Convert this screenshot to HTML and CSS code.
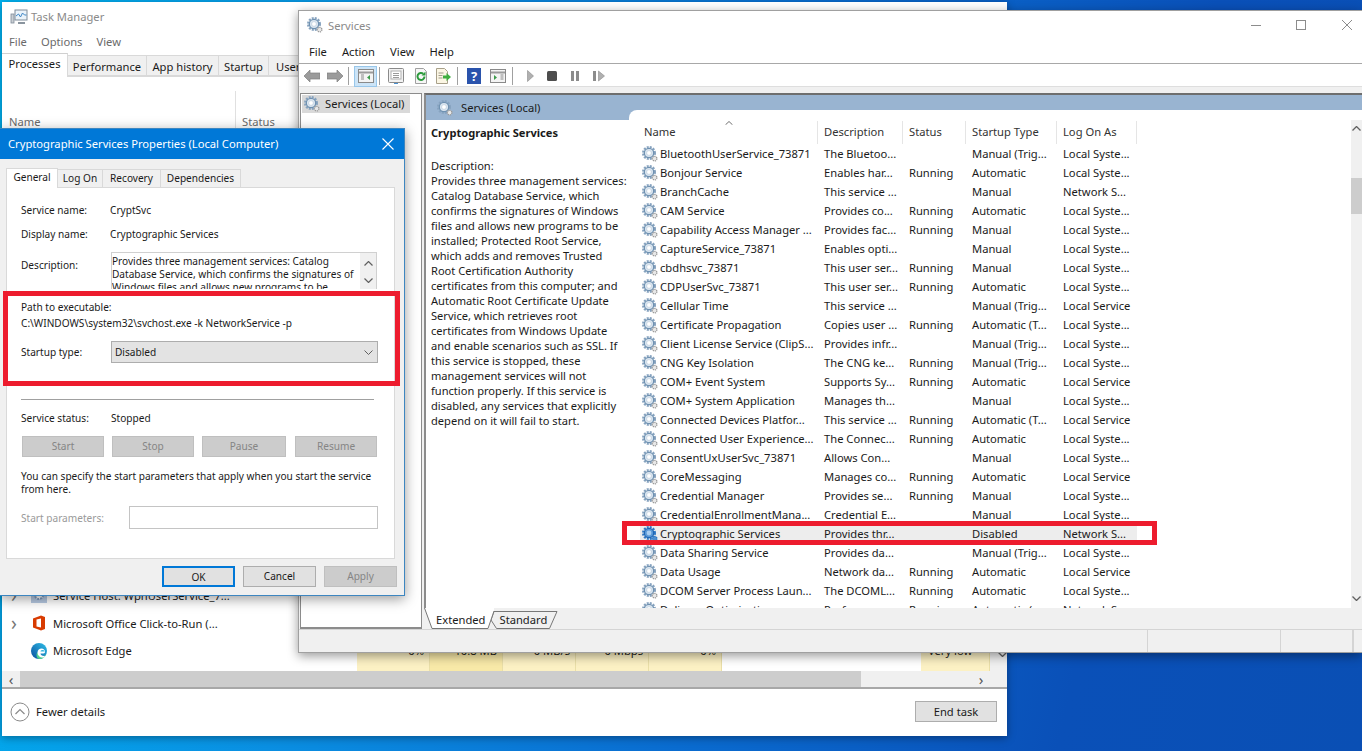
FILE: index.html
```html
<!DOCTYPE html>
<html>
  <head>
    <meta charset="UTF-8" />
    <meta name="viewport" content="width=device-width, initial-scale=1.0" />
    <link rel="stylesheet" href="styles.css">
    <title>Services</title>
  </head>

  <body>
    <svg class="defs" width="0" height="0">
      <defs>
        <linearGradient id="edge-body" x1="0" y1="1" x2="1" y2="0">
          <stop offset="0" stop-color="#0b4f9e" />
          <stop offset="1" stop-color="#2fc0e8" />
        </linearGradient>
      </defs>
      <symbol id="gear" viewBox="0 0 16 16">
        <circle cx="7" cy="7" r="6" fill="none" stroke="#87a3bf" stroke-width="2" stroke-dasharray="2 1.15" />
        <circle cx="7" cy="7" r="4.7" fill="#dbe6f0" stroke="#6f91b1" stroke-width="1.3" />
        <circle cx="7" cy="7" r="2.4" fill="#fff" stroke="#b4c6d8" stroke-width=".6" />
        <circle cx="12.6" cy="12.6" r="2.3" fill="#e8e8e8" stroke="#9a9a9a" stroke-width="1.3" stroke-dasharray="1.2 .7" />
      </symbol>
      <symbol id="gear-sel" viewBox="0 0 16 16">
        <circle cx="7" cy="7" r="6" fill="none" stroke="#2f78c4" stroke-width="2" stroke-dasharray="2 1.15" />
        <circle cx="7" cy="7" r="4.7" fill="#5c9ad8" stroke="#1f66b4" stroke-width="1.3" />
        <circle cx="7" cy="7" r="2.4" fill="#a9cdf0" />
        <circle cx="12.6" cy="12.6" r="2.3" fill="#4f8fd0" stroke="#2f78c4" stroke-width="1.3" stroke-dasharray="1.2 .7" />
      </symbol>
    </svg>

    <div class="desktop">

      <!-- task manager, behind everything -->
      <div class="window tm">
        <div class="tm-title">
          <svg class="tm-logo" viewBox="0 0 18 16" width="18" height="16">
            <rect x="5" y="1" width="12" height="10" fill="#eaf3fa" stroke="#7f8c99" />
            <path d="M6 7l2.500-2 2 3 2-4 2 2h2" fill="none" stroke="#3d86c6" />
            <rect x="1" y="5" width="3" height="9" fill="#c9ced3" stroke="#7f8c99" stroke-width=".8" />
            <path d="M8 14h7" stroke="#8a949e" stroke-width="2" />
          </svg>
          Task Manager
        </div>
        <div class="tm-menu"><span>File</span><span>Options</span><span>View</span></div>
        <div class="tm-tabs">
          <div class="tm-tab active w-proc">Processes</div>
          <div class="tm-tab w-perf">Performance</div>
          <div class="tm-tab w-app">App history</div>
          <div class="tm-tab w-start">Startup</div>
          <div class="tm-tab w-users">Users</div>
        </div>
        <div class="tm-table">
          <div class="tm-head">
            <div class="tm-head-name">Name</div>
            <div class="tm-head-status">Status</div>
          </div>
          <div class="tm-rows">
            <div class="tm-row">
              <span class="chev">&#8250;</span>
              <svg class="tm-ico" viewBox="0 0 16 16" width="16" height="16">
                <rect width="16" height="16" fill="#b6c9e2" />
                <circle cx="8" cy="8" r="4" fill="#fff" stroke="#7f9cc0" stroke-width="2" stroke-dasharray="2 1" />
              </svg>
              <span class="tm-name">Service Host: WpnUserService_7...</span>
            </div>
            <div class="tm-row">
              <span class="chev">&#8250;</span>
              <svg class="tm-ico" viewBox="0 0 16 16" width="16" height="16">
                <path d="M2 3.500 10 .5l4 1.500v12l-4 1.500-8-3z" fill="#d83b01" />
                <path d="M5.500 4.500 10 3.500v9l-4.500-1z" fill="#fff" />
              </svg>
              <span class="tm-name">Microsoft Office Click-to-Run (...</span>
            </div>
            <div class="tm-row last">
              <span class="chev"></span>
              <svg class="tm-ico" viewBox="0 0 16 16" width="16" height="16">
                <circle cx="8" cy="8" r="8" fill="url(#edge-body)" />
                <path d="M6.500 9c0 3 3 5 6.500 4l2-1.500C14 14.500 11 16 8.500 16 6 16 4.500 12 6.500 9z" fill="#4fd08c" />
                <path d="M6.500 9.500C6.500 7 8.500 5.500 10.500 5.500s3.500 1.500 3.500 3.500c0 1-1 1.500-3 1.500H9.500c0 1.500 2 3 4.500 2.500l-1 1.500C9 15 6.500 12.500 6.500 9.500z" fill="#fff" />
                <path d="M9.500 8.500c0-1 1-1.500 2-1.500s2 .5 2 1.500z" fill="#2fb4e0" />
              </svg>
              <span class="tm-name">Microsoft Edge</span>
              <div class="tm-cells">
                <div class="cell">0%</div>
                <div class="cell dark">10.8 MB</div>
                <div class="cell">0 MB/s</div>
                <div class="cell">0 Mbps</div>
                <div class="cell">0%</div>
                <div class="cell blank"></div>
                <div class="cell power">Very low</div>
                <div class="cell scroll">
                  <svg viewBox="0 0 9 5" width="9" height="5"><path d="M.5.500l4 4 4-4" fill="none" stroke="#606060" stroke-width="1.300" /></svg>
                </div>
              </div>
            </div>
          </div>
        </div>
        <div class="tm-hscroll">
          <span class="arrow">&#8249;</span>
          <div class="thumb"></div>
          <span class="arrow">&#8250;</span>
        </div>
        <div class="tm-footer">
          <div class="fewer">
            <svg viewBox="0 0 20 20" width="20" height="20">
              <circle cx="10" cy="10" r="9" fill="#fff" stroke="#8a8a8a" />
              <path d="M5.500 12 10 7.500l4.500 4.500" fill="none" stroke="#8a8a8a" stroke-width="1.200" />
            </svg>
            Fewer details
          </div>
          <div class="end-task">End task</div>
        </div>
      </div>

      <!-- services console -->
      <div class="window svc">
        <div class="svc-title">
          <svg class="gear" width="16" height="16"><use href="#gear" /></svg>
          <span class="svc-title-text">Services</span>
          <div class="caption">
            <svg viewBox="0 0 10 10" width="10" height="10"><path d="M0 5.500h10" stroke="#8c8c8c" /></svg>
            <svg viewBox="0 0 10 10" width="10" height="10"><rect x=".5" y=".5" width="9" height="9" fill="none" stroke="#8c8c8c" /></svg>
            <svg viewBox="0 0 10 10" width="10" height="10"><path d="M0 0l10 10M10 0L0 10" stroke="#8c8c8c" /></svg>
          </div>
        </div>
        <div class="svc-menu"><span>File</span><span>Action</span><span>View</span><span>Help</span></div>
        <div class="toolbar">
          <svg class="t-back" viewBox="0 0 16 12" width="16" height="12"><path d="M0 6l6-6v3h10v6H6v3z" fill="#9b9b9b" stroke="#808080" stroke-width=".7" /></svg>
          <svg class="t-fwd" viewBox="0 0 16 12" width="16" height="12"><path d="M16 6l-6-6v3H0v6h10v3z" fill="#9b9b9b" stroke="#808080" stroke-width=".7" /></svg>
          <div class="t-sep first"></div>
          <div class="t-on">
            <svg viewBox="0 0 16 14" width="16" height="14">
              <rect x=".5" y=".5" width="15" height="13" fill="#f4f4f4" stroke="#8a8a8a" />
              <path d="M1 3.500h14" stroke="#9a9a9a" stroke-width="2" />
              <path d="M3 6h3M3 8h3M3 10h3" stroke="#8a8a8a" />
              <path d="M12 6v5l-3-2.500z" fill="#3c9a4a" />
            </svg>
          </div>
          <div class="t-sep"></div>
          <svg class="t-prop" viewBox="0 0 16 16" width="16" height="16">
            <rect x=".5" y=".5" width="15" height="14" rx="1" fill="#f2f2f2" stroke="#8a8a8a" />
            <rect x="3" y="3" width="10" height="8" fill="#fff" stroke="#b0b0b0" />
            <path d="M5 5.500h6M5 7.500h6M5 9.500h6" stroke="#9a9a9a" />
            <path d="M6 15.500h4" stroke="#4a90d0" />
          </svg>
          <svg class="t-ref" viewBox="0 0 16 16" width="16" height="16">
            <path d="M2.500.5h8l3 3v12h-11z" fill="#f6f6f6" stroke="#a0a0a0" />
            <path d="M11.500 8.500a3.500 3.500 0 1 1-1.200-2.700" fill="none" stroke="#2c9a3c" stroke-width="2" />
            <path d="M12.500 3.500v4h-4z" fill="#2c9a3c" />
          </svg>
          <svg class="t-exp" viewBox="0 0 16 16" width="16" height="16">
            <path d="M1.500.5h8l3 3v12h-11z" fill="#fbf6e4" stroke="#a8a08a" />
            <path d="M3.500 5h5M3.500 7.500h4M3.500 10h4" stroke="#a09a8a" />
            <path d="M8 7.500h3.500V5L16 9l-4.500 4v-2.500H8z" fill="#3fae3f" />
          </svg>
          <div class="t-sep mid"></div>
          <svg class="t-help" viewBox="0 0 14 16" width="14" height="16">
            <rect width="14" height="16" fill="#2a53ac" />
            <text x="7" y="13" class="qmark">?</text>
          </svg>
          <svg class="t-act" viewBox="0 0 16 14" width="16" height="14">
            <rect x=".5" y=".5" width="15" height="13" fill="#f4f4f4" stroke="#8a8a8a" />
            <path d="M1 3.500h14" stroke="#9a9a9a" stroke-width="2" />
            <path d="M10.500 6h3M10.500 8h3M10.500 10h3" stroke="#8a8a8a" />
            <path d="M4 6v5l3-2.500z" fill="#3c9a4a" />
          </svg>
          <div class="t-sep last"></div>
          <svg class="t-play" viewBox="0 0 7 12" width="7" height="12"><path d="M.5.500v11l6-5.500z" fill="#b0b0b0" stroke="#8c8c8c" stroke-width=".6" /></svg>
          <svg class="t-stop" viewBox="0 0 10 10" width="10" height="10"><rect width="10" height="10" rx="1.500" fill="#4d4d4d" /></svg>
          <svg class="t-pause" viewBox="0 0 8 10" width="8" height="10"><path d="M0 0h3v10H0zM5 0h3v10H5z" fill="#8c8c8c" /></svg>
          <svg class="t-resume" viewBox="0 0 12 12" width="12" height="12"><path d="M0 1h3v10H0z" fill="#8c8c8c" /><path d="M5.500 1v10l6-5z" fill="#b0b0b0" stroke="#8c8c8c" stroke-width=".6" /></svg>
        </div>

        <div class="svc-panes">
          <div class="tree">
            <div class="tree-item">
              <svg class="gear" width="16" height="16"><use href="#gear" /></svg>
              <span>Services (Local)</span>
            </div>
          </div>
          <div class="main">
            <div class="main-pane">
              <div class="band">
                <svg class="gear" width="16" height="16"><use href="#gear" /></svg>
                <span>Services (Local)</span>
              </div>
              <div class="main-body">
                <div class="detail">
                  <div class="detail-name">Cryptographic Services</div>
                  Description:<br>
                  Provides three management services:<br>
                  Catalog Database Service, which<br>
                  confirms the signatures of Windows<br>
                  files and allows new programs to be<br>
                  installed; Protected Root Service,<br>
                  which adds and removes Trusted<br>
                  Root Certification Authority<br>
                  certificates from this computer; and<br>
                  Automatic Root Certificate Update<br>
                  Service, which retrieves root<br>
                  certificates from Windows Update<br>
                  and enable scenarios such as SSL. If<br>
                  this service is stopped, these<br>
                  management services will not<br>
                  function properly. If this service is<br>
                  disabled, any services that explicitly<br>
                  depend on it will fail to start.
                </div>
                <div class="list-wrap">
                  <div class="list">
                    <div class="list-head">
                      <div class="hcell first">Name
                        <svg class="sort" viewBox="0 0 8 4" width="8" height="4"><path d="M.5 3.800 4 .5l3.500 3.300" fill="none" stroke="#707070" /></svg>
                      </div>
                      <div class="hcell">Description</div>
                      <div class="hcell">Status</div>
                      <div class="hcell">Startup Type</div>
                      <div class="hcell">Log On As</div>
                    </div>
                    <div class="row"><div class="c-name"><svg class="gear" width="16" height="16"><use href="#gear" /></svg>BluetoothUserService_73871</div><div>The Bluetoo...</div><div></div><div>Manual (Trig...</div><div>Local Syste...</div></div>
                    <div class="row"><div class="c-name"><svg class="gear" width="16" height="16"><use href="#gear" /></svg>Bonjour Service</div><div>Enables har...</div><div>Running</div><div>Automatic</div><div>Local Syste...</div></div>
                    <div class="row"><div class="c-name"><svg class="gear" width="16" height="16"><use href="#gear" /></svg>BranchCache</div><div>This service ...</div><div></div><div>Manual</div><div>Network S...</div></div>
                    <div class="row"><div class="c-name"><svg class="gear" width="16" height="16"><use href="#gear" /></svg>CAM Service</div><div>Provides co...</div><div>Running</div><div>Automatic</div><div>Local Syste...</div></div>
                    <div class="row"><div class="c-name"><svg class="gear" width="16" height="16"><use href="#gear" /></svg>Capability Access Manager ...</div><div>Provides fac...</div><div>Running</div><div>Manual</div><div>Local Syste...</div></div>
                    <div class="row"><div class="c-name"><svg class="gear" width="16" height="16"><use href="#gear" /></svg>CaptureService_73871</div><div>Enables opti...</div><div></div><div>Manual</div><div>Local Syste...</div></div>
                    <div class="row"><div class="c-name"><svg class="gear" width="16" height="16"><use href="#gear" /></svg>cbdhsvc_73871</div><div>This user ser...</div><div>Running</div><div>Manual</div><div>Local Syste...</div></div>
                    <div class="row"><div class="c-name"><svg class="gear" width="16" height="16"><use href="#gear" /></svg>CDPUserSvc_73871</div><div>This user ser...</div><div>Running</div><div>Automatic</div><div>Local Syste...</div></div>
                    <div class="row"><div class="c-name"><svg class="gear" width="16" height="16"><use href="#gear" /></svg>Cellular Time</div><div>This service ...</div><div></div><div>Manual (Trig...</div><div>Local Service</div></div>
                    <div class="row"><div class="c-name"><svg class="gear" width="16" height="16"><use href="#gear" /></svg>Certificate Propagation</div><div>Copies user ...</div><div>Running</div><div>Automatic (T...</div><div>Local Syste...</div></div>
                    <div class="row"><div class="c-name"><svg class="gear" width="16" height="16"><use href="#gear" /></svg>Client License Service (ClipS...</div><div>Provides infr...</div><div></div><div>Manual (Trig...</div><div>Local Syste...</div></div>
                    <div class="row"><div class="c-name"><svg class="gear" width="16" height="16"><use href="#gear" /></svg>CNG Key Isolation</div><div>The CNG ke...</div><div>Running</div><div>Manual (Trig...</div><div>Local Syste...</div></div>
                    <div class="row"><div class="c-name"><svg class="gear" width="16" height="16"><use href="#gear" /></svg>COM+ Event System</div><div>Supports Sy...</div><div>Running</div><div>Automatic</div><div>Local Service</div></div>
                    <div class="row"><div class="c-name"><svg class="gear" width="16" height="16"><use href="#gear" /></svg>COM+ System Application</div><div>Manages th...</div><div></div><div>Manual</div><div>Local Syste...</div></div>
                    <div class="row"><div class="c-name"><svg class="gear" width="16" height="16"><use href="#gear" /></svg>Connected Devices Platfor...</div><div>This service ...</div><div>Running</div><div>Automatic (T...</div><div>Local Service</div></div>
                    <div class="row"><div class="c-name"><svg class="gear" width="16" height="16"><use href="#gear" /></svg>Connected User Experience...</div><div>The Connec...</div><div>Running</div><div>Automatic</div><div>Local Syste...</div></div>
                    <div class="row"><div class="c-name"><svg class="gear" width="16" height="16"><use href="#gear" /></svg>ConsentUxUserSvc_73871</div><div>Allows Con...</div><div></div><div>Manual</div><div>Local Syste...</div></div>
                    <div class="row"><div class="c-name"><svg class="gear" width="16" height="16"><use href="#gear" /></svg>CoreMessaging</div><div>Manages co...</div><div>Running</div><div>Automatic</div><div>Local Service</div></div>
                    <div class="row"><div class="c-name"><svg class="gear" width="16" height="16"><use href="#gear" /></svg>Credential Manager</div><div>Provides se...</div><div>Running</div><div>Manual</div><div>Local Syste...</div></div>
                    <div class="row"><div class="c-name"><svg class="gear" width="16" height="16"><use href="#gear" /></svg>CredentialEnrollmentMana...</div><div>Credential E...</div><div></div><div>Manual</div><div>Local Syste...</div></div>
                    <div class="row selected"><div class="c-name"><svg class="gear" width="16" height="16"><use href="#gear-sel" /></svg>Cryptographic Services</div><div>Provides thr...</div><div></div><div>Disabled</div><div>Network S...</div></div>
                    <div class="row"><div class="c-name"><svg class="gear" width="16" height="16"><use href="#gear" /></svg>Data Sharing Service</div><div>Provides da...</div><div></div><div>Manual (Trig...</div><div>Local Syste...</div></div>
                    <div class="row"><div class="c-name"><svg class="gear" width="16" height="16"><use href="#gear" /></svg>Data Usage</div><div>Network da...</div><div>Running</div><div>Automatic</div><div>Local Service</div></div>
                    <div class="row"><div class="c-name"><svg class="gear" width="16" height="16"><use href="#gear" /></svg>DCOM Server Process Laun...</div><div>The DCOML...</div><div>Running</div><div>Automatic</div><div>Local Syste...</div></div>
                    <div class="row"><div class="c-name"><svg class="gear" width="16" height="16"><use href="#gear" /></svg>Delivery Optimization</div><div>Performs ...</div><div>Running</div><div>Automatic (...</div><div>Network S...</div></div>
                  </div>
                  <div class="vscroll">
                    <svg viewBox="0 0 9 5" width="9" height="5"><path d="M.5 4.500l4-4 4 4" fill="none" stroke="#606060" stroke-width="1.300" /></svg>
                    <div class="vthumb"></div>
                    <svg class="down" viewBox="0 0 9 5" width="9" height="5"><path d="M.5.500l4 4 4-4" fill="none" stroke="#606060" stroke-width="1.300" /></svg>
                  </div>
                </div>
              </div>
            </div>
            <div class="view-tabs">
              <svg class="view-shapes" viewBox="0 0 140 21" width="140" height="21">
                <path d="M70 3.500h63L125.500 20.500H72.500L67 12z" fill="#f0f0f0" stroke="#777" />
                <path d="M.5 0 8 20.500h56L70 3V0z" fill="#fff" />
                <path d="M.5 0 8 20.500h56L70 3" fill="none" stroke="#777" />
              </svg>
              <span class="view-label ext">Extended</span>
              <span class="view-label std">Standard</span>
            </div>
          </div>
        </div>
        <div class="svc-status">
          <div class="status-cell wide"></div>
          <div class="status-cell mid"></div>
          <div class="status-cell small"></div>
          <div class="status-cell"></div>
        </div>
        <div class="red-box red-row"></div>
      </div>

      <!-- properties dialog -->
      <div class="window dlg">
        <div class="dlg-title">
          <span>Cryptographic Services Properties (Local Computer)</span>
          <svg viewBox="0 0 12 12" width="12" height="12"><path d="M.5.500l11 11M11.500.500l-11 11" stroke="#fff" stroke-width="1.100" /></svg>
        </div>
        <div class="dlg-tabs">
          <div class="dlg-tab active t-gen">General</div>
          <div class="dlg-tab t-log">Log On</div>
          <div class="dlg-tab t-rec">Recovery</div>
          <div class="dlg-tab t-dep">Dependencies</div>
        </div>
        <div class="dlg-panel">
          <div class="field f-name"><span class="lbl">Service name:</span><span>CryptSvc</span></div>
          <div class="field f-display"><span class="lbl">Display name:</span><span>Cryptographic Services</span></div>
          <div class="field f-desc">
            <span class="lbl">Description:</span>
            <div class="desc-box">
              <div class="desc-text">Provides three management services: Catalog Database Service, which confirms the signatures of Windows files and allows new programs to be</div>
              <div class="desc-scroll">
                <svg viewBox="0 0 9 5" width="9" height="5"><path d="M.5 4.500l4-4 4 4" fill="none" stroke="#606060" stroke-width="1.200" /></svg>
                <svg viewBox="0 0 9 5" width="9" height="5"><path d="M.5.500l4 4 4-4" fill="none" stroke="#606060" stroke-width="1.200" /></svg>
              </div>
            </div>
          </div>
          <div class="path-label">Path to executable:</div>
          <div class="path-value">C:\WINDOWS\system32\svchost.exe -k NetworkService -p</div>
          <div class="field f-startup">
            <span class="lbl">Startup type:</span>
            <div class="combo">
              Disabled
              <svg viewBox="0 0 9 5" width="9" height="5"><path d="M.5.500l4 4 4-4" fill="none" stroke="#606060" /></svg>
            </div>
          </div>
          <div class="dlg-rule"></div>
          <div class="field f-status"><span class="lbl">Service status:</span><span class="status-val">Stopped</span></div>
          <div class="svc-buttons">
            <div class="btn off b-start">Start</div>
            <div class="btn off b-stop">Stop</div>
            <div class="btn off b-pause">Pause</div>
            <div class="btn off b-resume">Resume</div>
          </div>
          <div class="hint">You can specify the start parameters that apply when you start the service<br>from here.</div>
          <div class="field f-params">
            <span class="lbl-params">Start parameters:</span>
            <div class="params-input"></div>
          </div>
        </div>
        <div class="dlg-buttons">
          <div class="btn ok">OK</div>
          <div class="btn">Cancel</div>
          <div class="btn off">Apply</div>
        </div>
        <div class="red-box red-path"></div>
      </div>

    </div>
  </body>
</html>
```

FILE: styles.css
```css
* {
  box-sizing: border-box;
}

body {
  margin: 0px;
  font-family: "Noto Sans", "Open Sans", sans-serif;
  font-size: 11.2px;
  color: #1a1a1a;
}

.defs {
  position: absolute;
}

.desktop {
  position: relative;
  width: 1362px;
  height: 751px;
  overflow: hidden;
  background: linear-gradient(102deg, #00b2f0 0%, #0a8fe2 28%, #0a6cd0 55%, #0a50b8 80%, #0a4fb4 100%);
}

.window {
  position: absolute;
  display: flex;
  flex-direction: column;
}

.gear {
  flex: none;
}

.red-box {
  position: absolute;
  border: 5px solid #ed1c2e;
}

/* task manager */
.tm {
  left: 2px;
  top: 2px;
  width: 1005px;
  height: 734px;
  background: #fff;
  box-shadow: 0 2px 8px rgba(0, 0, 0, .35);
}

.tm-title {
  display: flex;
  align-items: center;
  gap: 3px;
  height: 29px;
  margin-bottom: 1px;
  padding-left: 8px;
  color: #8a8a8a;
}

.tm-menu {
  display: flex;
  gap: 14px;
  height: 20px;
  line-height: 20px;
  padding-left: 7px;
  color: #6a6a6a;
}

.tm-tabs {
  display: flex;
  align-items: flex-end;
  height: 25px;
  border-bottom: 1px solid #d9d9d9;
}

.tm-tab {
  height: 21px;
  line-height: 21px;
  text-align: center;
  background: #f0f0f0;
  border: 1px solid #d9d9d9;
  border-left: none;
}

.tm-tab.active {
  height: 24px;
  line-height: 20px;
  margin-bottom: -1px;
  background: #fff;
  border-bottom: none;
  border-top-color: #d0d0d0;
}

.w-proc { width: 66px; }
.w-perf { width: 79px; }
.w-app { width: 72px; }
.w-start { width: 50px; }
.w-users {
  width: 60px;
  text-align: left;
  padding-left: 7px;
}

.tm-table {
  flex: 1;
  display: flex;
  flex-direction: column;
  justify-content: space-between;
}

.tm-head {
  display: flex;
  height: 37px;
  margin-top: 14px;
  color: #6a6a6a;
}

.tm-head-name {
  width: 234px;
  padding: 23px 0 0 7px;
  border-right: 1px solid #e0e0e0;
}

.tm-head-status {
  padding: 23px 0 0 6px;
}

.tm-row {
  display: flex;
  align-items: center;
  height: 28px;
}

.tm-row.last {
  height: 34px;
  align-items: flex-start;
}

.chev {
  width: 29px;
  padding-left: 9px;
  font-size: 19px;
  line-height: 26px;
  color: #777;
}

.tm-ico {
  flex: none;
  margin-right: 6px;
}

.tm-row.last .tm-ico {
  margin-top: 6px;
}

.tm-row.last .tm-name {
  line-height: 28px;
}

.tm-name {
  width: 304px;
  white-space: nowrap;
}

.tm-cells {
  display: flex;
  height: 34px;
}

.cell {
  width: 73px;
  height: 34px;
  line-height: 28px;
  text-align: right;
  padding-right: 5px;
  background: #fcf1c4;
  border-right: 1px solid #eadfa8;
}

.cell.dark {
  background: #f8e9a8;
}

.cell.blank {
  width: 199px;
  background: #fff;
  border: none;
}

.cell.power {
  width: 69px;
  text-align: left;
  padding: 0 0 0 7px;
}

.cell.scroll {
  width: 17px;
  background: #f0f0f0;
  border: none;
  padding: 13px 0 0 4px;
  line-height: 5px;
}

.tm-hscroll {
  display: flex;
  align-items: center;
  height: 16px;
  background: #f0f0f0;
}

.tm-hscroll .arrow {
  width: 18px;
  text-align: center;
  font-size: 15px;
  line-height: 14px;
  color: #555;
}

.tm-hscroll .thumb {
  width: 841px;
  height: 16px;
  background: #cdcdcd;
}

.tm-hscroll .arrow:last-child {
  margin-left: 111px;
}

.tm-footer {
  display: flex;
  align-items: center;
  justify-content: space-between;
  height: 49px;
  border-top: 2px solid #a8a8a8;
  padding: 0 10px 2px 8px;
}

.fewer {
  display: flex;
  align-items: center;
  gap: 6px;
}

.end-task {
  width: 82px;
  height: 21px;
  line-height: 19px;
  text-align: center;
  background: #e1e1e1;
  border: 1px solid #adadad;
}

/* services window */
.svc {
  left: 298px;
  top: 10px;
  width: 1064px;
  height: 643px;
  background: #f0f0f0;
  border: 1px solid #a0a0a0;
  border-right: none;
  box-shadow: 0 3px 10px rgba(0, 0, 0, .4);
}

.svc-title {
  display: flex;
  align-items: center;
  height: 30px;
  padding: 0 0 2px 8px;
  background: #fff;
}

.svc-title-text {
  margin-left: 5px;
  color: #8a8a8a;
}

.caption {
  display: flex;
  gap: 35px;
  margin-left: auto;
  margin-right: 10px;
}

.caption svg + svg + svg {
  margin-left: 1px;
}

.svc-menu {
  display: flex;
  gap: 15px;
  height: 23px;
  line-height: 22px;
  padding-left: 10px;
  background: #fff;
  border-bottom: 1px solid #a8a8a8;
}

.toolbar {
  display: flex;
  align-items: center;
  height: 23px;
  padding: 2px 0 0 5px;
  background: #fff;
  border-bottom: 1px solid #dedede;
}

.toolbar svg {
  flex: none;
}

.t-fwd { margin-left: 7px; }
.t-sep {
  width: 1px;
  height: 18px;
  background: #a0a0a0;
}
.t-sep.first { margin: 0 5px; }
.t-on {
  display: flex;
  align-items: center;
  justify-content: center;
  width: 23px;
  height: 21px;
  background: #cce4f7;
  border: 1px solid #99c7ea;
}
.t-sep { margin-left: 2px; }
.t-prop { margin-left: 8px; }
.t-ref { margin-left: 9px; }
.t-exp { margin-left: 6px; }
.t-sep.mid { margin-left: 6px; }
.t-help { margin-left: 9px; }
.t-act { margin-left: 9px; }
.t-sep.last { margin-left: 6px; }
.t-play { margin-left: 14px; }
.t-stop { margin-left: 13px; }
.t-pause { margin-left: 14px; }
.t-resume { margin-left: 14px; }

.qmark {
  font-size: 13px;
  font-weight: 700;
  fill: #fff;
  text-anchor: middle;
}

.svc-panes {
  flex: 1;
  display: flex;
  padding: 6px 0 0 1px;
  min-height: 0;
}

.tree {
  flex: none;
  width: 122px;
  padding: 1px;
  background: #fff;
  border: 1px solid #8c8c8c;
  border-width: 1px 1px 2px 1px;
}

.tree-item {
  display: flex;
  align-items: center;
  gap: 5px;
  width: 108px;
  height: 18px;
  padding-left: 2px;
  background: #d9d9d9;
  white-space: nowrap;
}

.tree-item span {
  margin-top: -2px;
}

.main {
  flex: 1;
  display: flex;
  flex-direction: column;
  margin-left: 2px;
  min-width: 0;
}

.main-pane {
  flex: 1;
  display: flex;
  flex-direction: column;
  min-height: 0;
  background: #fff;
  border-top: 2px solid #6e6e6e;
  border-left: 2px solid #8c8c8c;
}

.band {
  display: flex;
  align-items: center;
  flex: none;
  height: 25px;
  padding-left: 11px;
  background: #99b4d1;
}

.band span {
  margin-left: 8px;
}

.main-body {
  flex: 1;
  display: flex;
  min-height: 0;
}

.detail {
  flex: none;
  width: 203px;
  padding: 5px 0 0 5px;
  font-size: 11.1px;
  line-height: 15px;
  white-space: nowrap;
}

.detail-name {
  font-weight: 700;
  margin-bottom: 18px;
}

.list-wrap {
  flex: 1;
  display: flex;
  min-width: 0;
  margin-top: -10px;
  background: #fff;
  border-top-left-radius: 8px;
}

.list {
  flex: 1;
  padding-top: 11px;
  overflow: hidden;
}

.list-head {
  display: grid;
  grid-template-columns: 189px 85px 63px 91px 80px;
  height: 23px;
}

.hcell {
  position: relative;
  padding-left: 6px;
  line-height: 22px;
  color: #333;
  border-right: 1px solid #e5e5e5;
}

.hcell.first {
  padding-left: 15px;
}

.sort {
  position: absolute;
  left: 96px;
  top: 0px;
}

.row {
  display: grid;
  grid-template-columns: 178px 85px 63px 91px 80px;
  height: 19px;
  line-height: 19px;
  margin-left: 11px;
  width: 497px;
  white-space: nowrap;
}

.row > div {
  padding-left: 6px;
  overflow: hidden;
}

.row > .c-name {
  display: flex;
  align-items: center;
  gap: 2px;
  padding-left: 2px;
}

.row.selected {
  background: #ededed;
}

.vscroll {
  position: relative;
  flex: none;
  display: flex;
  flex-direction: column;
  align-items: center;
  width: 11px;
  margin-top: 10px;
  padding-top: 6px;
  background: #f0f0f0;
}

.vthumb {
  width: 11px;
  height: 36px;
  margin-top: 47px;
  background: #cdcdcd;
}

.vscroll .down {
  margin-top: auto;
  margin-bottom: 7px;
}

.view-tabs {
  position: relative;
  flex: none;
  display: flex;
  height: 21px;
}

.view-shapes {
  position: absolute;
  left: 0px;
  top: 0px;
}

.view-label {
  position: relative;
  line-height: 24px;
}

.view-label.ext {
  margin-left: 12px;
}

.view-label.std {
  margin-left: 14px;
}

.svc-status {
  display: flex;
  flex: none;
  height: 23px;
  border-top: 1px solid #d4d4d4;
}

.status-cell {
  border-right: 1px solid #d4d4d4;
}

.status-cell.wide { width: 849px; }
.status-cell.mid { width: 133px; }
.status-cell.small { width: 72px; }

.red-row {
  left: 323px;
  top: 510px;
  width: 535px;
  height: 24px;
}

/* properties dialog */
.dlg {
  left: 0px;
  top: 128px;
  width: 405px;
  height: 468px;
  background: #f0f0f0;
  border: 1px solid #3d86c0;
  border-left: none;
  box-shadow: 0 3px 12px rgba(0, 0, 0, .4);
  font-size: 10.1px;
  line-height: 14px;
}

.dlg-title {
  display: flex;
  align-items: center;
  justify-content: space-between;
  height: 30px;
  padding: 0 10px 0 8px;
  font-size: 11.2px;
  color: #fff;
  background: #0078d7;
}

.dlg-tabs {
  display: flex;
  align-items: flex-end;
  height: 28px;
  padding-left: 6px;
}

.dlg-tab {
  height: 18px;
  line-height: 17px;
  text-align: center;
  border: 1px solid #d9d9d9;
  border-left: none;
  border-bottom: none;
  background: #f0f0f0;
}

.dlg-tab.active {
  height: 20px;
  margin-bottom: -1px;
  position: relative;
  background: #fff;
  border-left: 1px solid #d9d9d9;
}

.t-gen { width: 52px; }
.t-log { width: 45px; }
.t-rec { width: 58px; }
.t-dep { width: 80px; }

.dlg-panel {
  height: 372px;
  margin: 0 9px 0 6px;
  padding: 0 14px;
  background: #fff;
  border: 1px solid #d9d9d9;
}

.field {
  display: flex;
}

.lbl {
  flex: none;
  width: 89px;
}

.f-name { margin-top: 15px; }
.f-display { margin-top: 10px; }
.f-desc { margin-top: 11px; height: 37px; }

.desc-box {
  display: flex;
  width: 266px;
  height: 37px;
  margin-left: 1px;
  overflow: hidden;
  border: 1px solid #d0d0d0;
  border-bottom: none;
}

.desc-text {
  flex: 1;
  line-height: 13px;
  margin-top: 2px;
}

.desc-scroll {
  display: flex;
  flex-direction: column;
  align-items: center;
  gap: 12px;
  flex: none;
  width: 16px;
  padding-top: 8px;
  background: #f0f0f0;
}

.f-desc .lbl {
  margin-top: 6px;
}

.path-label { margin-top: 11px; }
.path-value { margin-top: 2px; }

.f-startup {
  align-items: center;
  margin-top: 11px;
}

.combo {
  display: flex;
  align-items: center;
  justify-content: space-between;
  width: 267px;
  height: 22px;
  margin-left: 1px;
  padding: 0 4px 0 3px;
  background: #e3e3e3;
  border: 1px solid #adadad;
}

.dlg-rule {
  width: 353px;
  height: 1px;
  margin-top: 36px;
  background: #a0a0a0;
}

.f-status { margin-top: 11px; }
.status-val { margin-left: 1px; }

.svc-buttons {
  display: flex;
  margin: 11px 0 0 1px;
}

.btn {
  width: 73px;
  height: 21px;
  line-height: 19px;
  text-align: center;
  background: #e1e1e1;
  border: 1px solid #adadad;
}

.btn.off {
  background: #cccccc;
  border-color: #bfbfbf;
  color: #858585;
}

.b-start, .b-stop { width: 82px; margin-right: 8px; }
.b-pause { width: 84px; margin-right: 9px; }
.b-resume { width: 82px; }

.hint {
  margin-top: 13px;
  line-height: 13px;
}

.f-params {
  align-items: center;
  margin-top: 10px;
}

.lbl-params {
  flex: none;
  width: 108px;
  color: #9a9a9a;
}

.params-input {
  width: 249px;
  height: 23px;
  border: 1px solid #c4c4c4;
}

.dlg-buttons {
  display: flex;
  justify-content: flex-end;
  gap: 8px;
  margin-top: 7px;
  padding-right: 7px;
}

.btn.ok {
  border: 2px solid #0078d7;
}

.red-path {
  left: 3px;
  top: 162px;
  width: 397px;
  height: 95px;
}
```
